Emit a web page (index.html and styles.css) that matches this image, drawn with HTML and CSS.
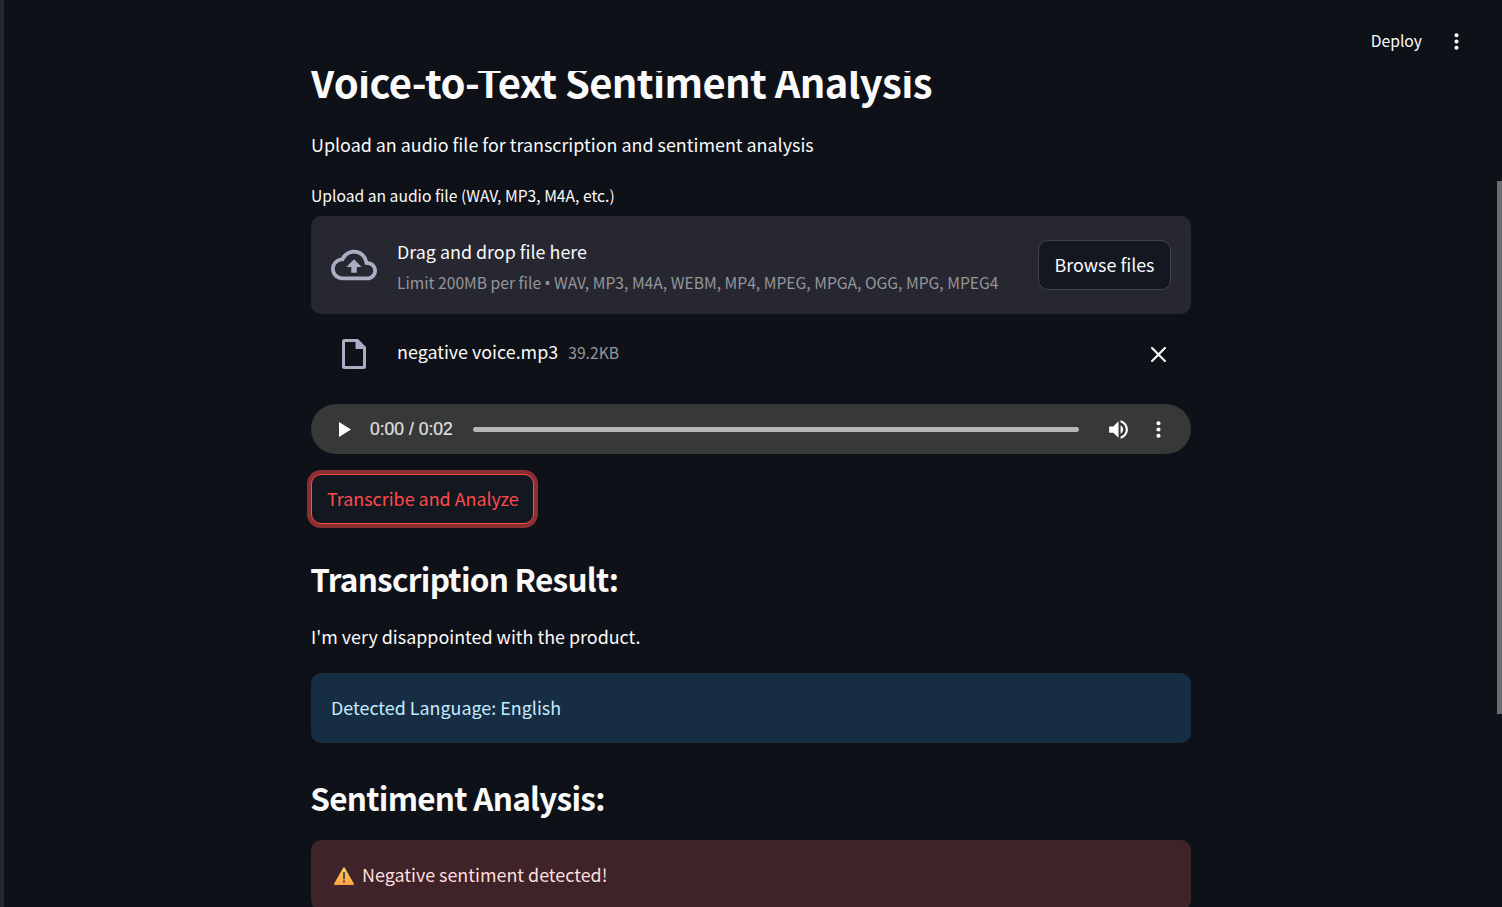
FILE: index.html
```html
<!DOCTYPE html>
<html lang="en">
<head>
<meta charset="utf-8">
<title>Voice-to-Text Sentiment Analysis</title>
<link rel="stylesheet" href="styles.css">
</head>
<body>
<div class="app">
  <header class="toolbar">
    <span class="deploy">Deploy</span>
    <svg class="menu" viewBox="0 0 24 24"><path fill="currentColor" d="M12 8a2 2 0 1 0 0-4 2 2 0 0 0 0 4zm0 2a2 2 0 1 0 0 4 2 2 0 0 0 0-4zm0 6a2 2 0 1 0 0 4 2 2 0 0 0 0-4z"/></svg>
  </header>
  <main class="content">
    <h1 class="title"><span>Voice-to-Text Sentiment Analysis</span></h1>
    <p class="intro"><span>Upload an audio file for transcription and sentiment analysis</span></p>
    <div class="label"><span>Upload an audio file (WAV, MP3, M4A, etc.)</span></div>
    <section class="dropzone">
      <svg class="cloud" viewBox="0 0 24 24"><path fill="currentColor" d="M19.35 10.04A7.49 7.49 0 0 0 12 4C9.11 4 6.6 5.64 5.35 8.04A5.994 5.994 0 0 0 0 14c0 3.31 2.69 6 6 6h13c2.76 0 5-2.24 5-5 0-2.64-2.05-4.78-4.65-4.96zM19 18H6c-2.21 0-4-1.79-4-4 0-2.05 1.53-3.76 3.56-3.97l1.07-.11.5-.95A5.469 5.469 0 0 1 12 6c2.62 0 4.88 1.86 5.39 4.43l.3 1.5 1.53.11A2.98 2.98 0 0 1 22 15c0 1.65-1.35 3-3 3zM8 13h2.55v3h2.9v-3H16l-4-4z"/></svg>
      <div class="hint">
        <span class="hint-main">Drag and drop file here</span>
        <span class="hint-sub">Limit 200MB per file <span class="dot">•</span> WAV, MP3, M4A, WEBM, MP4, MPEG, MPGA, OGG, MPG, MPEG4</span>
      </div>
      <button class="btn btn-browse"><span>Browse files</span></button>
    </section>
    <div class="file">
      <svg class="file-icon" viewBox="0 0 24 30"><path fill="currentColor" fill-rule="evenodd" d="M2.500 0H16l8 8v19.500a2.500 2.500 0 0 1-2.500 2.500h-19A2.500 2.500 0 0 1 0 27.500v-25A2.500 2.500 0 0 1 2.500 0zM3 3v24h18V10h-7.500V3z"/></svg>
      <span class="file-name">negative voice.mp3</span>
      <span class="file-size">39.2KB</span>
      <svg class="close" viewBox="0 0 14 14"><path d="M1 1l12 12M13 1L1 13" stroke="currentColor" stroke-width="2" stroke-linecap="round"/></svg>
    </div>
    <div class="player">
      <svg class="play" viewBox="0 0 12 15"><path fill="currentColor" d="M0 0v15l12-7.500z"/></svg>
      <span class="time">0:00 / 0:02</span>
      <div class="track"></div>
      <svg class="volume" viewBox="0 0 24 24"><path fill="currentColor" d="M3 9v6h4l5 5V4L7 9H3zm13.500 3A4.500 4.500 0 0 0 14 7.970v8.050A4.470 4.470 0 0 0 16.500 12zM14 3.230v2.060c2.890.86 5 3.540 5 6.710s-2.110 5.850-5 6.710v2.060c4.010-.91 7-4.490 7-8.770s-2.990-7.860-7-8.770z"/></svg>
      <svg class="more" viewBox="0 0 24 24"><path fill="currentColor" d="M12 8a2 2 0 1 0 0-4 2 2 0 0 0 0 4zm0 2a2 2 0 1 0 0 4 2 2 0 0 0 0-4zm0 6a2 2 0 1 0 0 4 2 2 0 0 0 0-4z"/></svg>
    </div>
    <button class="btn btn-active"><span>Transcribe and Analyze</span></button>
    <h2 class="heading"><span>Transcription Result:</span></h2>
    <p class="result"><span>I'm very disappointed with the product.</span></p>
    <div class="alert info"><span>Detected Language: English</span></div>
    <h2 class="heading second"><span>Sentiment Analysis:</span></h2>
    <div class="alert error">
      <svg class="warn" viewBox="0 0 20 18"><defs><linearGradient id="amber" x1="0" y1="0" x2="0" y2="1"><stop offset="0" stop-color="#ffd25a"/><stop offset="1" stop-color="#ff9f4a"/></linearGradient></defs><path fill="url(#amber)" d="M9.200.8q.8-1.200 1.600 0l9 15.700q.5 1.300-.8 1.500H1q-1.300-.2-.8-1.500z"/><path fill="#4b3f4d" d="M9.100 5h1.800v7.200H9.100zM9.100 13.600h1.800v1.800H9.100z"/></svg>
      <span>Negative sentiment detected!</span>
    </div>
  </main>
  <div class="side-edge"></div>
  <div class="scroll-thumb"></div>
</div>
</body>
</html>
```

FILE: styles.css
```css
* { box-sizing: border-box; }
body {
  margin: 0;
  background: #0e1117;
  color: #fafafa;
  font-family: "Noto Sans CJK SC", "Noto Sans", sans-serif;
  font-size: 17.900px;
  line-height: 32px;
}
svg { display: block; flex: none; }
h1, h2, p { margin: 0; }
.app {
  position: relative;
  height: 907px;
  overflow: hidden;
  display: flex;
  flex-direction: column;
}
.side-edge {
  position: absolute;
  left: 0; top: 0; bottom: 0;
  width: 4px;
  background: #262730;
}
.scroll-thumb {
  position: absolute;
  right: 0; top: 181px;
  width: 5px; height: 533px;
  background: #6b6c70;
}
.toolbar {
  flex: none;
  height: 71px;
  padding: 24px 33px 15px 0;
  display: flex;
  justify-content: flex-end;
  align-items: center;
  gap: 22px;
}
.deploy { margin-top: 2px; font-size: 15.700px; }
.menu { width: 25px; height: 25px; margin-top: 3px; }
.content {
  flex: 1;
  min-height: 0;
  overflow: hidden;
  padding: 0 307px;
  display: flex;
  flex-direction: column;
}
.content > * { flex: none; margin-left: 4px; margin-right: 4px; }
.title {
  margin-top: -18px;
  font-size: 40px;
  line-height: 56px;
  font-weight: 700;
  letter-spacing: -0.640px;
  text-indent: -0.700px;
  white-space: nowrap;
}
.intro { margin-top: 19px; }
.label { margin-top: 22px; font-size: 15.670px; line-height: 28px; padding-bottom: 6px; }
.dropzone {
  height: 98px;
  border-radius: 10px;
  background: #262730;
  padding: 0 20px;
  display: flex;
  align-items: center;
}
.cloud { width: 46px; height: 46px; color: #a9aec4; }
.hint {
  flex: 1;
  margin: 2px 0 0 20px;
  display: flex;
  flex-direction: column;
  white-space: nowrap;
}
.hint-main { line-height: 32px; }
.hint-sub { padding-top: 2px; font-size: 15.670px; line-height: 28px; color: #95969b; }
.dot { font-family: "Noto Sans", sans-serif; line-height: 1; }
.btn {
  height: 50px;
  padding: 0 15px 2px;
  border: 1px solid #41444c;
  border-radius: 10px;
  background: #131720;
  color: inherit;
  font: inherit;
  white-space: nowrap;
}
.btn-browse { width: 133px; }
.btn-active {
  align-self: flex-start;
  width: 223px;
  margin-top: 20px;
  border-color: #ff4b4b;
  color: #ff4b4b;
  box-shadow: 0 0 0 4px #8c2f33;
}
.file {
  height: 60px;
  margin-top: 10px;
  padding: 0 25px 0 31px;
  display: flex;
  align-items: center;
}
.file-icon { width: 24px; height: 30px; color: #a9aec4; }
.file-name { margin: 0 10px 6px 31px; }
.file-size { flex: 1; margin-bottom: 3px; font-size: 15.670px; color: #95969b; }
.close { width: 15px; height: 15px; }
.player {
  height: 50px;
  margin-top: 20px;
  padding: 0 20px 0 28px;
  border-radius: 25px;
  background: #373938;
  color: #fff;
  display: flex;
  align-items: center;
}
.play { width: 12px; height: 15px; }
.time {
  margin-left: 19px;
  width: 84px;
  white-space: nowrap;
  font: 17.500px/24px "Liberation Sans", sans-serif;
  color: #e1e1e1;
  -webkit-text-stroke: 0.200px #e1e1e1;
}
.track { flex: 1; height: 5px; margin: 0 27px 0 19px; border-radius: 3px; background: #b5b5b5; }
.volume { width: 25px; height: 25px; margin-right: 15px; }
.more { width: 25px; height: 25px; }
.heading {
  margin-top: 34px;
  font-size: 31.500px;
  line-height: 40px;
  font-weight: 700;
  letter-spacing: -0.730px;
  text-indent: -0.700px;
}
.result { margin-top: 22px; }
.alert {
  height: 70px;
  padding: 0 20px 2px;
  border-radius: 10px;
  display: flex;
  align-items: center;
}
.info { margin-top: 21px; background: #172d43; color: #c7ebff; }
.second { margin-top: 34px; }
.error { margin-top: 23px; background: #3e2328; color: #ffdede; }
.warn { width: 20px; height: 18px; margin: 3px 8px 0 3px; }
```
